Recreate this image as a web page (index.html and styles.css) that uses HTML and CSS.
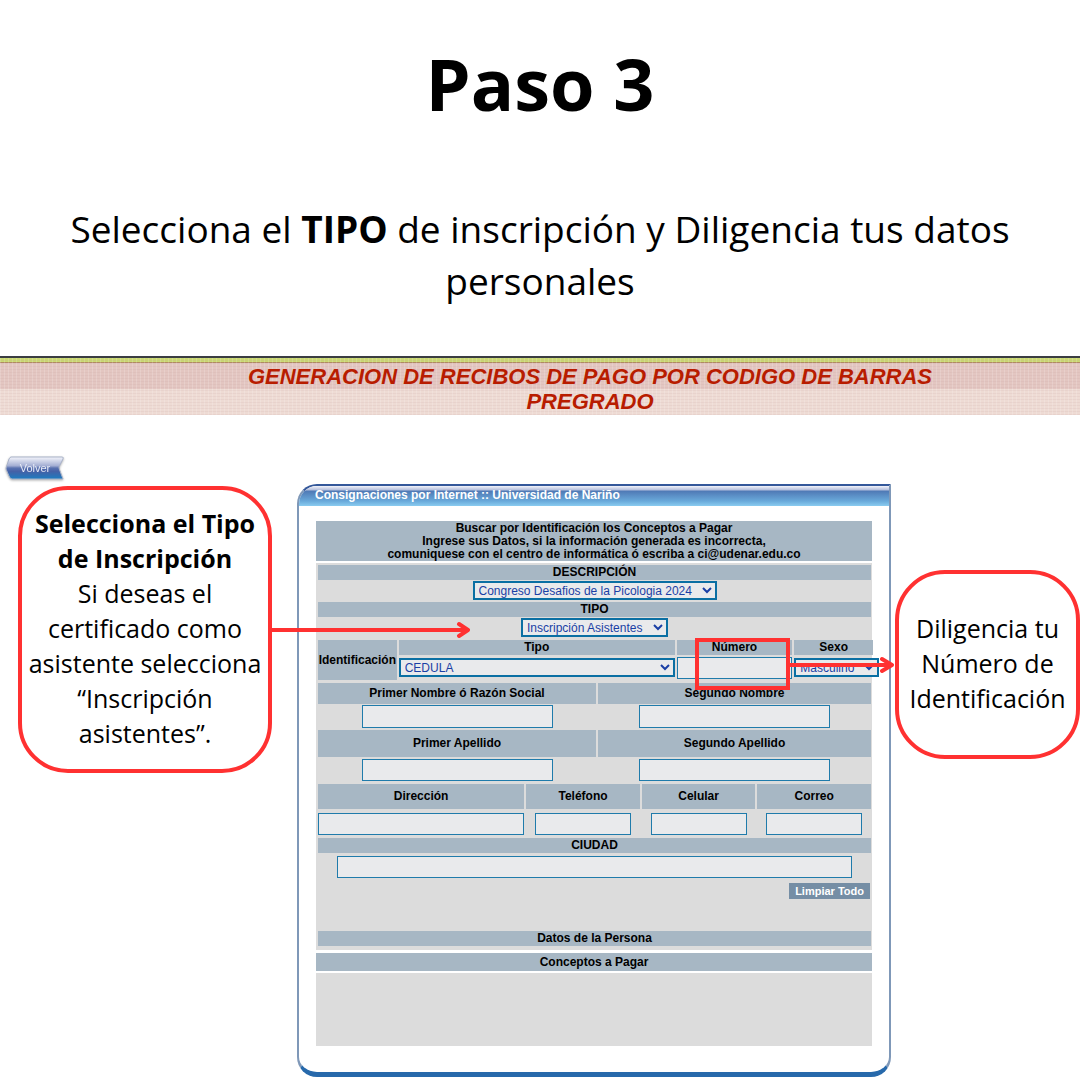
FILE: index.html
```html
<!DOCTYPE html>
<html lang="es">
<head>
    <meta charset="UTF-8">
    <meta name="viewport" content="width=device-width, initial-scale=1.0">
    <title>Paso 3</title>
    <link rel="stylesheet" href="styles.css">
</head>
<body>
    <header class="intro">
        <h1>Paso 3</h1>
        <p>Selecciona el <strong>TIPO</strong> de inscripción y Diligencia tus datos personales</p>
    </header>

    <div class="banner">
        <h2>GENERACION DE RECIBOS DE PAGO POR CODIGO DE BARRAS<br>PREGRADO</h2>
    </div>

    <button type="button" class="volver">
        <svg viewBox="0 0 60 26" aria-hidden="true">
            <defs>
                <linearGradient id="volverFondo" x1="0" y1="0" x2="0" y2="1">
                    <stop offset="0" stop-color="#f4f5fb"/>
                    <stop offset="0.4" stop-color="#a3aed3"/>
                    <stop offset="0.5" stop-color="#5a72b0"/>
                    <stop offset="0.65" stop-color="#4560a6"/>
                    <stop offset="1" stop-color="#1c7cc0"/>
                </linearGradient>
            </defs>
            <path d="M6 2H57Q59 2 58 4L54 12Q54 14 55 16L58 24H7Q5 24 4 21L1 14Q1 12 2 10L4 4Q5 2 6 2Z" fill="url(#volverFondo)" stroke="#a9b3c9"/>
        </svg>
        <span>Volver</span>
    </button>

    <main class="contenido">
        <aside class="nota nota-tipo">
            <p><strong>Selecciona el Tipo de Inscripción</strong><br>Si deseas el certificado como asistente selecciona “Inscripción asistentes”.</p>
            <svg class="flecha" viewBox="0 0 198 18" aria-hidden="true">
                <path d="M0 9H196M187 3L196 9L187 15"/>
            </svg>
        </aside>

        <form class="panel">
            <h3 class="panel-titulo">Consignaciones por Internet :: Universidad de Nariño</h3>

            <div class="panel-cuerpo">
                <p class="aviso">Buscar por Identificación los Conceptos a Pagar<br>Ingrese sus Datos, si la información generada es incorrecta,<br>comuniquese con el centro de informática ó escriba a ci@udenar.edu.co</p>

                <div class="campos">
                    <div class="campo">
                        <label for="descripcion">DESCRIPCIÓN</label>
                        <select id="descripcion">
                            <option>Congreso Desafios de la Picologia 2024</option>
                        </select>
                    </div>
                    <div class="campo">
                        <label for="tipoInscripcion">TIPO</label>
                        <select id="tipoInscripcion">
                            <option>Inscripción Asistentes</option>
                        </select>
                    </div>

                    <div class="fila identificacion">
                        <div class="rotulo">Identificación</div>
                        <div class="campo">
                            <label for="tipoDocumento">Tipo</label>
                            <select id="tipoDocumento" class="ancho">
                                <option>CEDULA</option>
                            </select>
                        </div>
                        <div class="campo campo-numero">
                            <label for="numero">Número</label>
                            <input type="text" id="numero" class="ancho">
                            <span class="resalte"></span>
                        </div>
                        <div class="campo campo-sexo">
                            <label for="sexo">Sexo</label>
                            <select id="sexo">
                                <option>Masculino</option>
                            </select>
                        </div>
                    </div>

                    <div class="fila dos nombres">
                        <div class="campo">
                            <label for="primerNombre">Primer Nombre ó Razón Social</label>
                            <input type="text" id="primerNombre">
                        </div>
                        <div class="campo">
                            <label for="segundoNombre">Segundo Nombre</label>
                            <input type="text" id="segundoNombre">
                        </div>
                    </div>

                    <div class="fila dos apellidos">
                        <div class="campo">
                            <label for="primerApellido">Primer Apellido</label>
                            <input type="text" id="primerApellido">
                        </div>
                        <div class="campo">
                            <label for="segundoApellido">Segundo Apellido</label>
                            <input type="text" id="segundoApellido">
                        </div>
                    </div>

                    <div class="fila contacto">
                        <div class="campo">
                            <label for="direccion">Dirección</label>
                            <input type="text" id="direccion" class="ancho">
                        </div>
                        <div class="campo">
                            <label for="telefono">Teléfono</label>
                            <input type="text" id="telefono">
                        </div>
                        <div class="campo">
                            <label for="celular">Celular</label>
                            <input type="text" id="celular">
                        </div>
                        <div class="campo">
                            <label for="correo">Correo</label>
                            <input type="text" id="correo">
                        </div>
                    </div>

                    <div class="campo ciudad">
                        <label for="ciudad">CIUDAD</label>
                        <input type="text" id="ciudad">
                    </div>

                    <button type="reset" class="limpiar">Limpiar Todo</button>

                    <h4 class="seccion">Datos de la Persona</h4>
                </div>

                <h4 class="seccion seccion-conceptos">Conceptos a Pagar</h4>
                <div class="conceptos"></div>
            </div>
        </form>

        <aside class="nota nota-numero">
            <p>Diligencia tu Número de Identificación</p>
            <svg class="flecha" viewBox="0 0 108 18" aria-hidden="true">
                <path d="M0 9H104M95 3L105 9L95 15"/>
            </svg>
        </aside>
    </main>
</body>
</html>
```
FILE: styles.css
```css
* {
    box-sizing: border-box;
}
body {
    margin: 0;
    background: #fff;
    color: #000;
    font-family: "Open Sans", sans-serif;
}
h1, h2, h3, h4, p {
    margin: 0;
}

/* Encabezado */
.intro {
    padding: 33px 40px 49px;
    text-align: center;
}
.intro h1 {
    font-size: 72px;
    line-height: 100px;
    margin-bottom: 70px;
}
.intro p {
    font-size: 37px;
    line-height: 52px;
}

/* Franja del titulo */
.banner {
    border-top: 2px solid #3b3d42;
    background:
        repeating-linear-gradient(90deg, rgba(255,255,255,0.16) 0 1px, transparent 1px 4px),
        repeating-linear-gradient(0deg, rgba(190,150,150,0.12) 0 1px, transparent 1px 3px),
        linear-gradient(#cbd873 0 4px, #b08a62 4px 5px, #e3c6c1 5px 31px, #eedbd4 31px);
    padding: 6px 0 1px 100px;
}
.banner h2 {
    color: #b81c00;
    font-family: "Liberation Sans", Arial, sans-serif;
    font-size: 22px;
    font-style: italic;
    line-height: 25px;
    text-align: center;
}

.volver {
    display: block;
    position: relative;
    width: 60px;
    height: 26px;
    margin: 40px 0 3px 5px;
    padding: 0;
    border: none;
    background: none;
    color: #e6eaf6;
    font-family: "Liberation Sans", Arial, sans-serif;
    font-size: 11px;
    line-height: 24px;
    cursor: pointer;
    filter: drop-shadow(0 1px 1px rgba(0,0,0,0.3));
}
.volver svg {
    position: absolute;
    inset: 0;
}
.volver span {
    position: relative;
}

.contenido {
    display: grid;
    grid-template-columns: 297fr 594fr 189fr;
    align-items: start;
}

/* Notas rojas */
.nota {
    display: flex;
    align-items: center;
    justify-content: center;
    position: relative;
    z-index: 1;
    padding-bottom: 3px;
    border: 4px solid #ff3131;
    border-radius: 50px;
    font-size: 25px;
    line-height: 35px;
    text-align: center;
}
.nota-tipo {
    margin: 2px 25px 0 18px;
    min-height: 287px;
}
.nota-numero {
    margin: 86px 0 0 4px;
    min-height: 189px;
}
.flecha {
    position: absolute;
    top: 50%;
    height: 18px;
    margin-top: -9px;
    fill: none;
    stroke: #ff3131;
    stroke-width: 4;
    stroke-linecap: round;
    stroke-linejoin: round;
}
.nota-tipo .flecha {
    left: calc(100% + 4px);
    width: 198px;
}
.nota-numero .flecha {
    right: calc(100% + 4px);
    width: 108px;
}

/* Panel de consignaciones */
.panel {
    border: 2px solid #7f98b8;
    border-top: 2px solid #34589a;
    border-bottom: 5px solid #2769ab;
    border-radius: 20px 0 20px 20px;
    font-family: "Liberation Sans", Arial, sans-serif;
    font-size: 12px;
    font-weight: bold;
}
.panel-titulo {
    height: 20px;
    border-radius: 18px 0 0 0;
    padding-left: 16px;
    background: linear-gradient(#f2f3fa, #b3bedc 4px, #4f79b5 5px, #69a9da 15px, #8accf0);
    color: #fff;
    font-size: 12px;
    line-height: 18px;
}
.panel-cuerpo {
    padding: 15px 17px 26px;
}
.aviso {
    padding-top: 1px;
    background: #a7b7c4;
    line-height: 13px;
    text-align: center;
}
.campos {
    margin-top: 2px;
    padding: 2px 1px 4px 2px;
    background: #dcdcdc;
}
.campo {
    display: flex;
    flex-direction: column;
    align-items: center;
    min-width: 0;
}
.campo label, .rotulo, .seccion {
    background: #a7b7c4;
    font-size: 12px;
    line-height: 15px;
    text-align: center;
}
.campo label {
    align-self: stretch;
}
.campo select {
    height: 19px;
    margin: 1px 0 2px;
    padding: 0 6px 0 0;
    border: 2px solid #0a6fa3;
    background: #e9eaec;
    color: #1a3fa5;
    font-family: "Liberation Sans", Arial, sans-serif;
    font-size: 12px;
}
.campo input {
    width: 70%;
    height: 22px;
    margin: 4px 0 3px;
    border: 1px solid #1f7bab;
    background: #e9eaec;
    color: #1a3fa5;
    font-size: 12px;
}
.campo .ancho {
    width: 100%;
}
.fila {
    display: grid;
    column-gap: 2px;
}
.identificacion {
    grid-template-columns: 79fr 277fr 116fr 79fr;
    margin: 1px -2px 3px 0;
}
.rotulo {
    line-height: 40px;
}
.identificacion .campo select {
    margin: 3px 0 0;
}
.identificacion .campo input {
    margin: 2px 0 0;
}
.campo-sexo {
    align-items: flex-start;
}
.campo-numero {
    position: relative;
}
.resalte {
    position: absolute;
    top: -2px;
    left: 18px;
    width: 95px;
    height: 52px;
    border: 4px solid #ff3131;
}
.dos {
    grid-template-columns: 278fr 273fr;
}
.dos .campo input {
    width: 191px;
    max-width: 100%;
}
.nombres label {
    line-height: 21px;
}
.nombres .campo input {
    height: 23px;
    margin: 1px 0 2px;
}
.apellidos label {
    line-height: 27px;
}
.apellidos .campo input {
    margin-top: 2px;
}
.contacto {
    grid-template-columns: 207fr 114fr 114fr 114fr;
}
.contacto label {
    line-height: 25px;
}
.contacto .campo input:not(.ancho) {
    width: 96px;
    max-width: 100%;
}
.ciudad input {
    width: 93%;
    margin-top: 3px;
}
.limpiar {
    display: block;
    height: 16px;
    margin: 2px 1px 32px auto;
    padding: 0 6px;
    border: none;
    background: #758ea5;
    color: #fff;
    font-family: "Liberation Sans", Arial, sans-serif;
    font-size: 11px;
    font-weight: bold;
    line-height: 16px;
}
.seccion-conceptos {
    margin: 3px 0 2px;
    line-height: 18px;
}
.conceptos {
    height: 73px;
    background: #dcdcdc;
}
```
